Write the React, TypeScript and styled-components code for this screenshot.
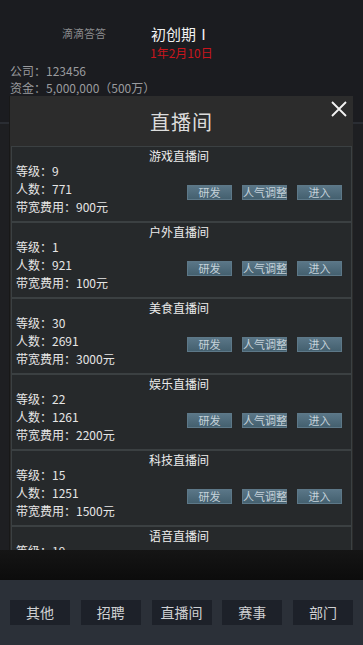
import React from 'react'
import styled, { createGlobalStyle } from 'styled-components'

const GlobalStyle = createGlobalStyle`
  html, body {
    margin: 0;
    padding: 0;
    background: #1b1c20;
  }
  body {
    font-family: 'Noto Sans CJK SC', 'Noto Sans', sans-serif;
  }
`

const Page = styled.div`
  position: relative;
  width: 363px;
  height: 645px;
  display: flex;
  flex-direction: column;
  overflow: hidden;
  background: #1b1c20;
`

const Header = styled.header`
  height: 122px;
  box-sizing: border-box;
  padding-top: 24px;
  display: flex;
  flex-direction: column;
`

const TopRow = styled.div`
  display: flex;
  align-items: flex-start;
`

const Nickname = styled.div`
  margin-left: 62px;
  width: 89px;
  font-size: 11px;
  line-height: 18px;
  color: #8c8c8f;
`

const StageBlock = styled.div`
  display: flex;
  flex-direction: column;
  align-items: flex-start;
`

const Stage = styled.div`
  font-size: 15px;
  line-height: 20px;
  color: #f2f2f2;
`

const GameDate = styled.div`
  margin-left: -1px;
  font-size: 12px;
  line-height: 18px;
  color: #c8161d;
`

const InfoLine = styled.div`
  padding-left: 10px;
  font-size: 12px;
  line-height: 17px;
  color: #9a9b9e;
`

const Body = styled.main`
  flex: 1;
  display: flex;
  flex-direction: column;
  border-top: 2px solid #2a2d33;
  background: #1e1f22;
`

const BodyFill = styled.div`
  flex: 1;
`

const Shade = styled.div`
  height: 30px;
  background: linear-gradient(#151515, #0c0c0c);
`

const BottomBar = styled.nav`
  height: 65px;
  box-sizing: border-box;
  background: #2b3038;
  display: flex;
  justify-content: space-between;
  align-items: flex-start;
  padding: 20px 10px 0;
`

const NavButton = styled.button`
  width: 60px;
  height: 25px;
  border: none;
  background: #1d2129;
  color: #cfd0d2;
  font-family: inherit;
  font-size: 14px;
  line-height: 25px;
  padding: 0;
`

const Modal = styled.section`
  position: absolute;
  left: 10px;
  top: 96px;
  width: 343px;
  height: 454px;
  background: #2c2c2c;
  box-shadow: -1px 0 0 #181818;
  display: flex;
  flex-direction: column;
`

const ModalHead = styled.div`
  position: relative;
  height: 50px;
  display: flex;
  align-items: center;
  justify-content: center;
`

const ModalTitle = styled.h2`
  margin: 0;
  font-size: 20px;
  font-weight: 400;
  color: #dcdcdc;
  letter-spacing: 1px;
`

const Close = styled.button`
  position: absolute;
  right: 4px;
  top: 3px;
  width: 20px;
  height: 20px;
  padding: 0;
  border: none;
  background: none;
`

const List = styled.div`
  flex: 1;
  overflow: hidden;
  margin: 0 1px;
  display: flex;
  flex-direction: column;
`

const Card = styled.div`
  flex: none;
  height: 76px;
  box-sizing: border-box;
  border: 1px solid #3b4042;
  background: #26292b;
  padding: 3px 9px 0 4px;
  display: flex;
  flex-direction: column;
`

const CardTitle = styled.div`
  text-align: center;
  font-size: 12px;
  line-height: 12px;
  color: #ececec;
`

const CardBody = styled.div`
  display: flex;
  align-items: center;
  justify-content: space-between;
`

const Stats = styled.div`
  display: flex;
  flex-direction: column;
`

const Stat = styled.div`
  font-size: 12px;
  line-height: 18px;
  color: #e6e6e6;
`

const Actions = styled.div`
  display: flex;
  gap: 10px;
  margin-top: 7px;
`

const ActionButton = styled.button`
  width: 45px;
  height: 15px;
  padding: 0;
  border: 1px solid #5d7888;
  background: linear-gradient(#5a7687, #44606f);
  color: #c5d2da;
  font-family: 'Noto Sans CJK SC', sans-serif;
  font-size: 11px;
  line-height: 13px;
  white-space: nowrap;
`

type Room = {
  name: string
  level: number
  people: number
  cost: number
}

const rooms: Room[] = [
  { name: '游戏直播间', level: 9, people: 771, cost: 900 },
  { name: '户外直播间', level: 1, people: 921, cost: 100 },
  { name: '美食直播间', level: 30, people: 2691, cost: 3000 },
  { name: '娱乐直播间', level: 22, people: 1261, cost: 2200 },
  { name: '科技直播间', level: 15, people: 1251, cost: 1500 },
  { name: '语音直播间', level: 19, people: 1102, cost: 1900 },
]

const navItems = ['其他', '招聘', '直播间', '赛事', '部门']

const RoomCard = ({ room }: { room: Room }) => (
  <Card>
    <CardTitle>{room.name}</CardTitle>
    <CardBody>
      <Stats>
        <Stat>等级：{room.level}</Stat>
        <Stat>人数：{room.people}</Stat>
        <Stat>带宽费用：{room.cost}元</Stat>
      </Stats>
      <Actions>
        <ActionButton>研发</ActionButton>
        <ActionButton>人气调整</ActionButton>
        <ActionButton>进入</ActionButton>
      </Actions>
    </CardBody>
  </Card>
)

export default function App() {
  return (
    <Page>
      <GlobalStyle />
      <Header>
        <TopRow>
          <Nickname>滴滴答答</Nickname>
          <StageBlock>
            <Stage>初创期Ⅰ</Stage>
            <GameDate>1年2月10日</GameDate>
          </StageBlock>
        </TopRow>
        <InfoLine>公司：123456</InfoLine>
        <InfoLine>资金：5,000,000（500万）</InfoLine>
      </Header>
      <Body>
        <BodyFill />
        <Shade />
      </Body>
      <BottomBar>
        {navItems.map((item) => (
          <NavButton key={item}>{item}</NavButton>
        ))}
      </BottomBar>
      <Modal>
        <ModalHead>
          <ModalTitle>直播间</ModalTitle>
          <Close aria-label="关闭">
            <svg width="20" height="20" viewBox="0 0 20 20">
              <path d="M3 3 L17 17 M17 3 L3 17" stroke="#f4f4f4" strokeWidth="1.8" />
            </svg>
          </Close>
        </ModalHead>
        <List>
          {rooms.map((room) => (
            <RoomCard key={room.name} room={room} />
          ))}
        </List>
      </Modal>
    </Page>
  )
}
